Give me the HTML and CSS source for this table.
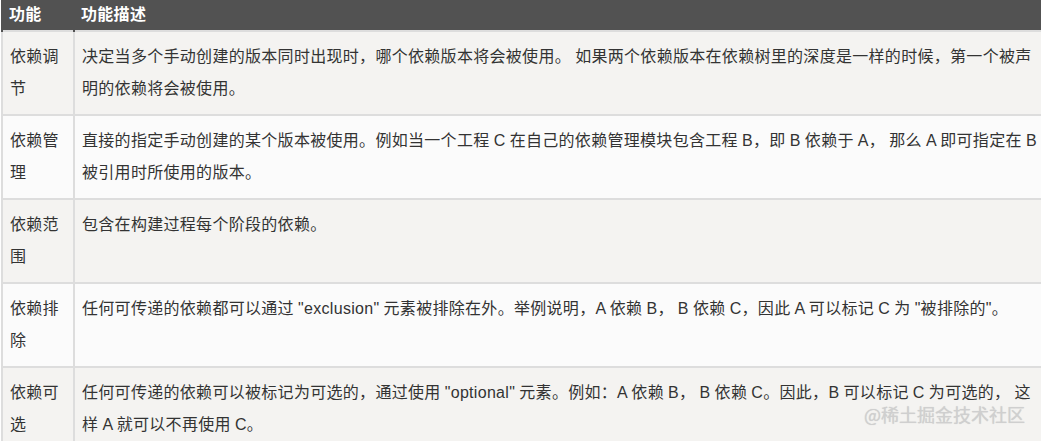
FILE: index.html
```html
<!DOCTYPE html>
<html lang="zh">
<head>
<meta charset="utf-8">
<link rel="stylesheet" href="styles.css">
</head>
<body>
<div class="page">
<table class="feat">
  <thead>
    <tr><th class="c1">功能</th><th class="c2">功能描述</th></tr>
  </thead>
  <tbody>
    <tr class="odd"><td>依赖调节</td><td>决定当多个手动创建的版本同时出现时，哪个依赖版本将会被使用。 如果两个依赖版本在依赖树里的深度是一样的时候，第一个被声明的依赖将会被使用。</td></tr>
    <tr class="even"><td>依赖管理</td><td>直接的指定手动创建的某个版本被使用。例如当一个工程 C 在自己的依赖管理模块包含工程 B，即 B 依赖于 A， 那么 A 即可指定在 B 被引用时所使用的版本。</td></tr>
    <tr class="odd"><td>依赖范围</td><td>包含在构建过程每个阶段的依赖。</td></tr>
    <tr class="even"><td>依赖排除</td><td>任何可传递的依赖都可以通过 "exclusion" 元素被排除在外。举例说明，A 依赖 B， B 依赖 C，因此 A 可以标记 C 为 "被排除的"。</td></tr>
    <tr class="odd"><td>依赖可选</td><td>任何可传递的依赖可以被标记为可选的，通过使用 "optional" 元素。例如：A 依赖 B， B 依赖 C。因此，B 可以标记 C 为可选的， 这样 A 就可以不再使用 C。</td></tr>
  </tbody>
</table>
<div class="mark">@稀土掘金技术社区</div>
</div>
</body>
</html>
```

FILE: styles.css
```css
html, body {
  margin: 0;
  padding: 0;
  background: #ffffff;
  overflow: hidden;
}
.page {
  position: relative;
  width: 1041px;
  height: 441px;
  overflow: hidden;
}
.feat {
  border-collapse: collapse;
  table-layout: fixed;
  width: 1046px;
  margin-left: 1px;
  font-family: "Liberation Sans", "Noto Sans CJK SC", sans-serif;
  font-size: 16px;
  letter-spacing: 0.3px;
  word-spacing: -0.6px;
  color: #333333;
}
.feat th {
  background: #525252;
  color: #ffffff;
  font-weight: bold;
  text-align: left;
  height: 30px;
  padding: 0 6px;
  line-height: 30px;
  border-left: 2px solid #525252;
}
.feat th.c1 { width: 58px; }
.feat td {
  border: 2px solid #dddddd;
  padding: 9px 6px 9px 7px;
  line-height: 32px;
  vertical-align: top;
}
.feat tr.odd td { background: #f4f3f1; }
.feat tr.even td { background: #fbfbfb; }
.mark {
  position: absolute;
  right: 16px;
  bottom: 14px;
  font-family: "Noto Sans CJK SC", sans-serif;
  font-size: 18px;
  color: #cfcfcf;
  text-shadow: 0 0 1px rgba(0,0,0,0.15);
}
```
